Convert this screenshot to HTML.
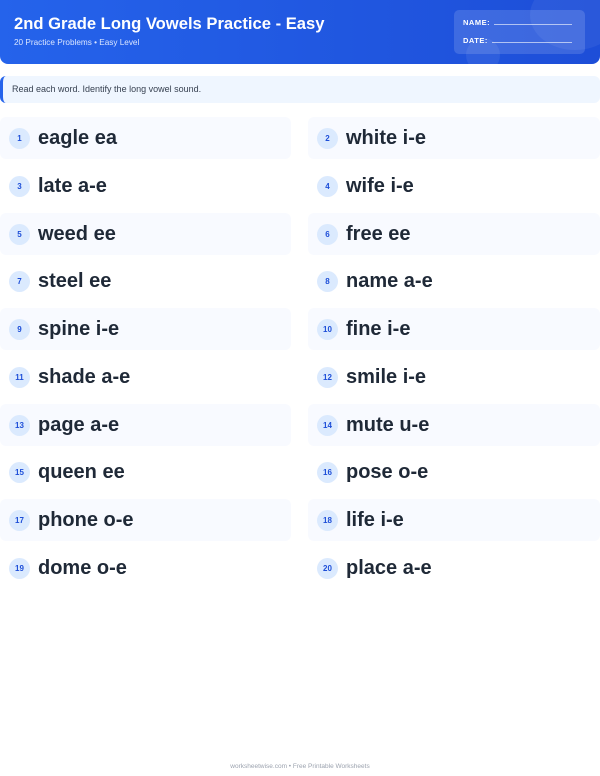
<!DOCTYPE html>
<html><head><meta charset="utf-8"><style>
*{margin:0;padding:0;box-sizing:border-box}
body{width:600px;height:776px;background:#fff;font-family:"Liberation Sans",Arial,sans-serif;position:relative;overflow:hidden}
.hdr{position:absolute;left:0;top:0;width:600px;height:64px;background:linear-gradient(90deg,#2563eb,#1d4ed8);border-radius:0 0 8px 8px;overflow:hidden}
.hdr h1{position:absolute;left:14px;top:14px;color:#fff;font-size:16.6px;font-weight:bold}
.hdr .sub{position:absolute;left:14px;top:38px;color:#dbe6ff;font-size:8.2px}
.box{position:absolute;left:454px;top:10px;width:131px;height:44px;background:rgba(255,255,255,.14);border-radius:5px}
.box div{position:absolute;left:9px;color:#fff;font-size:7.5px;font-weight:bold;letter-spacing:.5px}
.box span{display:inline-block;border-bottom:1px solid rgba(255,255,255,.6);width:78px;margin-left:4px}
.c1{position:absolute;left:530px;top:-20px;width:90px;height:70px;border-radius:50%;background:rgba(255,255,255,.06)}
.c2{position:absolute;left:466px;top:38px;width:34px;height:34px;border-radius:50%;background:rgba(255,255,255,.07)}
.ins{position:absolute;left:0;top:76px;width:600px;height:27px;background:#eff6ff;border-left:3px solid #2563eb;border-radius:6px;font-size:9px;color:#374151;padding:8px 0 0 9px}
.it{position:absolute;height:42px;border-radius:6px}
.it.s{background:#f8faff}
.n{position:absolute;left:9px;top:11px;width:21px;height:21px;border-radius:50%;background:#dbeafe;color:#1d4ed8;font-size:8px;font-weight:bold;text-align:center;line-height:21px}
.w{position:absolute;left:38px;top:10px;font-size:20px;font-weight:bold;color:#1f2937}
.ft{position:absolute;top:763px;width:600px;text-align:center;font-size:6.5px;color:#9ca3af}
</style></head><body>
<div class="hdr"><div class="c1"></div><div class="c2"></div>
<h1>2nd Grade Long Vowels Practice - Easy</h1>
<div class="sub">20 Practice Problems • Easy Level</div>
<div class="box"><div style="top:8px">NAME:<span></span></div><div style="top:26px">DATE:<span style="width:80px"></span></div></div>
</div>
<div class="ins">Read each word. Identify the long vowel sound.</div>
<div class="it s" style="left:0;top:117px;width:291px"><div class="n">1</div><div class="w">eagle ea</div></div>
<div class="it s" style="left:308px;top:117px;width:292px"><div class="n">2</div><div class="w">white i-e</div></div>
<div class="it" style="left:0;top:165px;width:291px"><div class="n">3</div><div class="w">late a-e</div></div>
<div class="it" style="left:308px;top:165px;width:292px"><div class="n">4</div><div class="w">wife i-e</div></div>
<div class="it s" style="left:0;top:213px;width:291px"><div class="n">5</div><div class="w">weed ee</div></div>
<div class="it s" style="left:308px;top:213px;width:292px"><div class="n">6</div><div class="w">free ee</div></div>
<div class="it" style="left:0;top:260px;width:291px"><div class="n">7</div><div class="w">steel ee</div></div>
<div class="it" style="left:308px;top:260px;width:292px"><div class="n">8</div><div class="w">name a-e</div></div>
<div class="it s" style="left:0;top:308px;width:291px"><div class="n">9</div><div class="w">spine i-e</div></div>
<div class="it s" style="left:308px;top:308px;width:292px"><div class="n">10</div><div class="w">fine i-e</div></div>
<div class="it" style="left:0;top:356px;width:291px"><div class="n">11</div><div class="w">shade a-e</div></div>
<div class="it" style="left:308px;top:356px;width:292px"><div class="n">12</div><div class="w">smile i-e</div></div>
<div class="it s" style="left:0;top:404px;width:291px"><div class="n">13</div><div class="w">page a-e</div></div>
<div class="it s" style="left:308px;top:404px;width:292px"><div class="n">14</div><div class="w">mute u-e</div></div>
<div class="it" style="left:0;top:451px;width:291px"><div class="n">15</div><div class="w">queen ee</div></div>
<div class="it" style="left:308px;top:451px;width:292px"><div class="n">16</div><div class="w">pose o-e</div></div>
<div class="it s" style="left:0;top:499px;width:291px"><div class="n">17</div><div class="w">phone o-e</div></div>
<div class="it s" style="left:308px;top:499px;width:292px"><div class="n">18</div><div class="w">life i-e</div></div>
<div class="it" style="left:0;top:547px;width:291px"><div class="n">19</div><div class="w">dome o-e</div></div>
<div class="it" style="left:308px;top:547px;width:292px"><div class="n">20</div><div class="w">place a-e</div></div>
<div class="ft">worksheetwise.com • Free Printable Worksheets</div>
</body></html>
